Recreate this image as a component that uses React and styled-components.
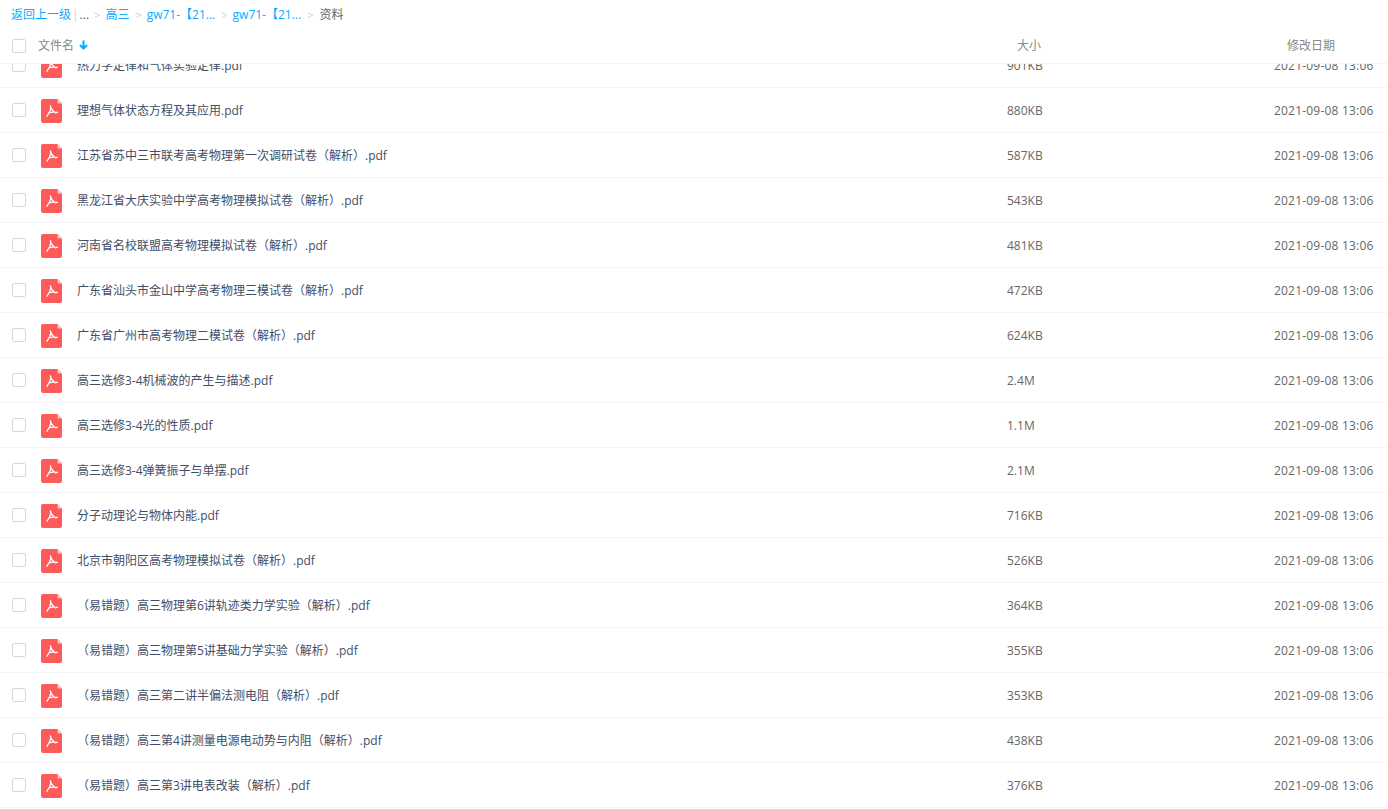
import React from "react";
import styled, { createGlobalStyle } from "styled-components";

const GlobalStyle = createGlobalStyle`
  html, body { margin: 0; padding: 0; background: #fff; overflow: hidden; }
  body { font-family: "Open Sans", "Noto Sans CJK SC", sans-serif; font-size: 12px; }
`;

const Page = styled.div`
  width: 1388px;
  height: 809px;
  overflow: hidden;
  display: flex;
  flex-direction: column;
`;

const Crumbs = styled.div`
  height: 28px;
  padding-left: 11px;
  display: flex;
  align-items: center;
  color: #666;
  white-space: nowrap;
`;

const CrumbLink = styled.a`
  color: #09aaff;
`;

const Divider = styled.span`
  color: #c5d8e6;
  margin: 0 1px 0 1px;
`;

const Ellipsis = styled.span`
  margin-right: -1px;
`;

const Current = styled.span`
  margin-left: 1px;
`;

const Sep = styled.span`
  color: #c5d2dc;
  font-size: 11px;
  margin: 0 5px 0 6px;
`;

const Row = styled.div`
  display: flex;
  align-items: center;
  flex: none;
  height: ${(p) => (p.$head ? "35px" : "44px")};
  border-bottom: 1px solid ${(p) => (p.$head ? "#f2f6fa" : "#f4f6f9")};
`;

const Check = styled.span`
  flex: none;
  box-sizing: border-box;
  width: 14px;
  height: 14px;
  margin-left: 12px;
  border: 1px solid #d3d9e3;
  border-radius: 2px;
  background: #fff;
`;

const HeadName = styled.div`
  margin: 0 0 2px 12px;
  flex: 1;
  color: #888;
  display: flex;
  align-items: center;
  gap: 5px;
`;

const HeadSize = styled.div`
  width: 120px;
  margin-bottom: 2px;
  color: #888;
  padding-left: 13px;
  box-sizing: border-box;
`;

const HeadDate = styled.div`
  width: 100px;
  margin: 0 14px 2px 150px;
  padding-left: 13px;
  box-sizing: border-box;
  color: #888;
`;

const List = styled.div`
  flex: 1;
  min-height: 0;
  overflow: hidden;
`;

const ListInner = styled.div`
  margin-top: -21px;
`;

const FileName = styled.div`
  flex: 1;
  margin-left: 15px;
  color: #424e67;
  white-space: nowrap;
`;

const Size = styled.div`
  width: 120px;
  padding-left: 3px;
  box-sizing: border-box;
  color: #666;
`;

const DateCell = styled.div`
  width: 100px;
  margin-left: 150px;
  margin-right: 14px;
  color: #666;
  letter-spacing: 0.2px;
  white-space: nowrap;
`;

const IconWrap = styled.svg`
  flex: none;
  margin: 2px 0 0 15px;
  display: block;
`;

const PdfIcon = () => (
  <IconWrap width="21" height="24" viewBox="0 0 21 24">
    <path d="M2 0h14.5L21 4.5V22a2 2 0 0 1-2 2H2a2 2 0 0 1-2-2V2a2 2 0 0 1 2-2z" fill="#ff5a5a" />
    <path d="M16.5 0L21 4.5h-3.5a1 1 0 0 1-1-1z" fill="#ffc0c0" />
    <path
      d="M9.4 7c.6 2.8 2 5 5.4 7M9.8 9c-.4 2.8-1.6 5.4-3.8 8.2M7.8 13.8c2.2-.7 4.6-1 8.6-.4"
      fill="none"
      stroke="#fff"
      strokeWidth="1.3"
      strokeLinecap="round"
    />
  </IconWrap>
);

const SortArrow = () => (
  <svg width="9" height="10" viewBox="0 0 9 10">
    <path d="M4.5 0.5v8M1 5l3.5 3.5L8 5" fill="none" stroke="#09aaff" strokeWidth="2" />
  </svg>
);

const files = [
  ["热力学定律和气体实验定律.pdf", "901KB"],
  ["理想气体状态方程及其应用.pdf", "880KB"],
  ["江苏省苏中三市联考高考物理第一次调研试卷（解析）.pdf", "587KB"],
  ["黑龙江省大庆实验中学高考物理模拟试卷（解析）.pdf", "543KB"],
  ["河南省名校联盟高考物理模拟试卷（解析）.pdf", "481KB"],
  ["广东省汕头市金山中学高考物理三模试卷（解析）.pdf", "472KB"],
  ["广东省广州市高考物理二模试卷（解析）.pdf", "624KB"],
  ["高三选修3-4机械波的产生与描述.pdf", "2.4M"],
  ["高三选修3-4光的性质.pdf", "1.1M"],
  ["高三选修3-4弹簧振子与单摆.pdf", "2.1M"],
  ["分子动理论与物体内能.pdf", "716KB"],
  ["北京市朝阳区高考物理模拟试卷（解析）.pdf", "526KB"],
  ["（易错题）高三物理第6讲轨迹类力学实验（解析）.pdf", "364KB"],
  ["（易错题）高三物理第5讲基础力学实验（解析）.pdf", "355KB"],
  ["（易错题）高三第二讲半偏法测电阻（解析）.pdf", "353KB"],
  ["（易错题）高三第4讲测量电源电动势与内阻（解析）.pdf", "438KB"],
  ["（易错题）高三第3讲电表改装（解析）.pdf", "376KB"],
];

const App = () => (
  <Page>
    <GlobalStyle />
    <Crumbs>
      <CrumbLink>返回上一级</CrumbLink>
      <Divider>|</Divider>
      <Ellipsis>...</Ellipsis>
      <Sep>&gt;</Sep>
      <CrumbLink>高三</CrumbLink>
      <Sep>&gt;</Sep>
      <CrumbLink>gw71-【21...</CrumbLink>
      <Sep>&gt;</Sep>
      <CrumbLink>gw71-【21...</CrumbLink>
      <Sep>&gt;</Sep>
      <Current>资料</Current>
    </Crumbs>
    <Row $head>
      <Check />
      <HeadName>
        文件名 <SortArrow />
      </HeadName>
      <HeadSize>大小</HeadSize>
      <HeadDate>修改日期</HeadDate>
    </Row>
    <List>
      <ListInner>
        {files.map(([name, size]) => (
          <Row key={name}>
            <Check />
            <PdfIcon />
            <FileName>{name}</FileName>
            <Size>{size}</Size>
            <DateCell>2021-09-08 13:06</DateCell>
          </Row>
        ))}
      </ListInner>
    </List>
  </Page>
);

export default App;
